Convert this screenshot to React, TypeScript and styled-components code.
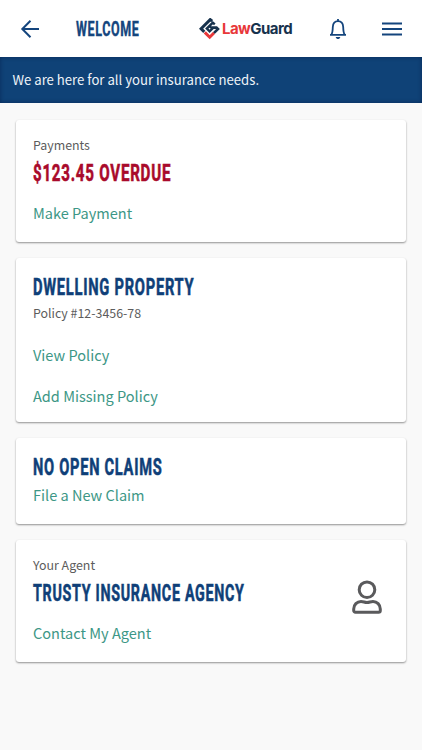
import React from 'react';
import styled, { createGlobalStyle } from 'styled-components';

interface HeadingProps {
      stretch: number;
      color?: string;
}

interface LinkProps {
      gap?: number;
}

interface CardProps {
      height: number;
      top?: number;
}

const GlobalStyle = createGlobalStyle`
      * {
            box-sizing: border-box;
      }
      body {
            margin: 0;
            background: #f9f9f9;
            font-family: "Noto Sans CJK SC", "Noto Sans", sans-serif;
      }
`;

const Page = styled.div`
      min-height: 750px;
      background: #f9f9f9;
`;

const Header = styled.header`
      display: flex;
      align-items: center;
      height: 57px;
      padding: 0 20px;
      background: #fff;
`;

const IconButton = styled.button`
      display: flex;
      flex: none;
      padding: 0;
      border: 0;
      background: none;
      color: #14457d;
`;

const Title = styled.h1`
      flex: none;
      width: 64px;
      margin: 1px 0 0 36px;
      font: 700 20px/24px Roboto, sans-serif;
      letter-spacing: 1px;
      color: #14457d;
      -webkit-text-stroke: 0.4px currentColor;
      white-space: nowrap;
      transform: scaleX(0.625);
      transform-origin: left;
`;

const Logo = styled.div`
      display: flex;
      flex: none;
      align-items: center;
      width: 95px;
      margin: 0 35px 0 59px;
`;

const LogoText = styled.span`
      margin-left: 2px;
      font: 700 15px/20px Inter, sans-serif;
      letter-spacing: -0.55px;
      color: #17324d;
      white-space: nowrap;

      em {
            font-style: normal;
            color: #e8383a;
      }
`;

const Bell = styled(IconButton)`
      margin-right: auto;
`;

const Banner = styled.div`
      height: 46px;
      padding: 0 12.5px;
      background: #0f4277;
      box-shadow: inset 0 0 4px rgba(0, 20, 60, 0.5);
      color: #eef3f8;
      font-size: 13.15px;
      line-height: 46px;
`;

const Cards = styled.main`
      display: flex;
      flex-direction: column;
      gap: 16px;
      padding: 17px 16px;
`;

const Card = styled.section<CardProps>`
      display: flex;
      justify-content: space-between;
      height: ${(props) => props.height}px;
      padding: ${(props) => props.top || 15}px 24px 0 17px;
      border-radius: 3px;
      background: #fff;
      box-shadow: 0 1px 2px rgba(0, 0, 0, 0.42);
`;

const Label = styled.div`
      color: #5c5c5c;
      font-size: 12.4px;
      line-height: 21px;
`;

const Heading = styled.h2<HeadingProps>`
      width: 200px;
      margin: 3px 0 0;
      font: 700 24px/28px Roboto, sans-serif;
      letter-spacing: 1.2px;
      color: ${(props) => props.color || '#0f3f78'};
      -webkit-text-stroke: 0.6px currentColor;
      white-space: nowrap;
      transform: scaleX(${(props) => props.stretch});
      transform-origin: left;
`;

const PolicyNumber = styled(Label)`
      margin-top: 2px;
`;

const Link = styled.a<LinkProps>`
      display: block;
      margin-top: ${(props) => (props.gap === undefined ? 16 : props.gap)}px;
      color: #3d9786;
      font-size: 14.55px;
      line-height: 20px;
`;

const AgentIcon = styled.svg`
      margin-top: 25px;
      flex: none;
`;

const LogoMark = () => (
      <svg width="21" height="22" viewBox="0 0 21 22" fill="none" strokeWidth="3">
            <path d="M13.200 3.200 11.200 1.600 2.100 10.700 5.300 13.900" stroke="#17324d" />
            <path d="M15.800 6.300 13.800 4.600 7.800 10.600 10.600 13.400 13.400 10.600 11 8.600" stroke="#17324d" strokeWidth="2.400" />
            <path d="M12.500 9.600H17.500L19 11 14.800 15.200" stroke="#17324d" strokeWidth="2.600" />
            <path d="M5.800 14.400 10.700 19.200 14.900 15" stroke="#e8383a" />
      </svg>
);

export default function App() {
      return (
            <Page>
                  <GlobalStyle />
                  <Header>
                        <IconButton aria-label="Back">
                              <svg width="20" height="20" viewBox="0 0 20 20" fill="none" stroke="currentColor" strokeWidth="2">
                                    <path d="M10.500 1.800 2.300 10l8.200 8.200M2.300 10H19" />
                              </svg>
                        </IconButton>
                        <Title>WELCOME</Title>
                        <Logo>
                              <LogoMark />
                              <LogoText><em>Law</em>Guard</LogoText>
                        </Logo>
                        <Bell aria-label="Notifications">
                              <svg width="18" height="22" viewBox="0 0 18 22" fill="none" stroke="currentColor" strokeWidth="1.8">
                                    <path d="M9 1v2.200M1 16.800h16M2.400 16.500c1.200-1.700 1.300-3.200 1.400-7.500C4 5.300 6 3.200 9 3.200s5 2.100 5.200 5.800c.1 4.300.2 5.800 1.400 7.500" />
                                    <path d="M6.700 18.900h4.600c-.4 1.400-1.200 2-2.300 2s-1.900-.6-2.300-2z" fill="currentColor" stroke="none" />
                              </svg>
                        </Bell>
                        <IconButton aria-label="Menu">
                              <svg width="20" height="14" viewBox="0 0 20 14" stroke="currentColor" strokeWidth="2">
                                    <path d="M0 1.500h20M0 7h20M0 12.500h20" />
                              </svg>
                        </IconButton>
                  </Header>
                  <Banner>We are here for all your insurance needs.</Banner>
                  <Cards>
                        <Card height={122}>
                              <div>
                                    <Label>Payments</Label>
                                    <Heading stretch={0.63} color="#a90a2b">$123.45 OVERDUE</Heading>
                                    <Link>Make Payment</Link>
                              </div>
                        </Card>
                        <Card height={164} top={12}>
                              <div>
                                    <Heading stretch={0.612}>DWELLING PROPERTY</Heading>
                                    <PolicyNumber>Policy #12-3456-78</PolicyNumber>
                                    <Link gap={21}>View Policy</Link>
                                    <Link gap={21}>Add Missing Policy</Link>
                              </div>
                        </Card>
                        <Card height={86} top={12}>
                              <div>
                                    <Heading stretch={0.609}>NO OPEN CLAIMS</Heading>
                                    <Link gap={4}>File a New Claim</Link>
                              </div>
                        </Card>
                        <Card height={122}>
                              <div>
                                    <Label>Your Agent</Label>
                                    <Heading stretch={0.595}>TRUSTY INSURANCE AGENCY</Heading>
                                    <Link>Contact My Agent</Link>
                              </div>
                              <AgentIcon width="30" height="34" viewBox="0 0 30 34" fill="none" stroke="#5a5a5c" strokeWidth="3">
                                    <circle cx="15" cy="9.700" r="7.800" />
                                    <path d="M9 21.500c2.500 0 3.500 1.100 6 1.100s3.500-1.100 6-1.100c4 0 7.300 3.200 7.300 7.500v1.500c0 1-.7 1.700-1.700 1.700H3.400c-1 0-1.700-.7-1.700-1.700V29c0-4.300 3.300-7.500 7.300-7.500z" />
                              </AgentIcon>
                        </Card>
                  </Cards>
            </Page>
      );
}
